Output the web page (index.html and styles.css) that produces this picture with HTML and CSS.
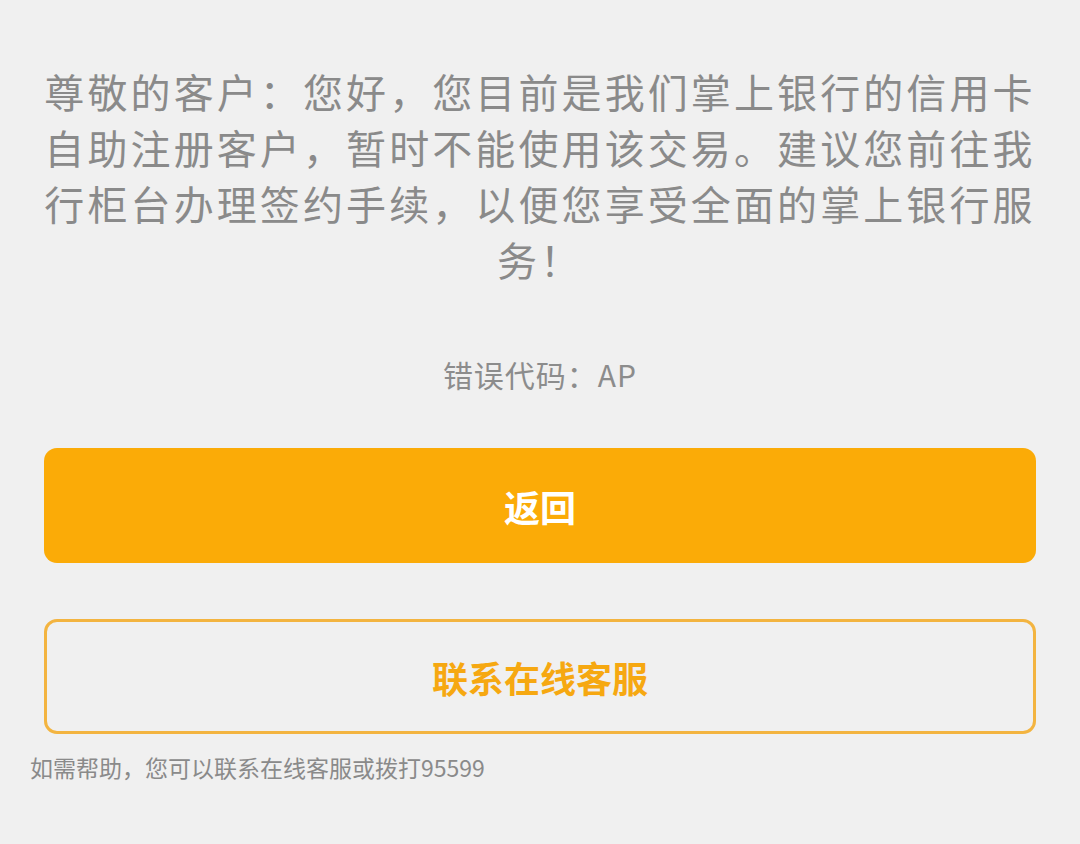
FILE: index.html
```html
<!DOCTYPE html>
<html lang="zh-CN">
  <head>
    <meta charset="UTF-8" />
    <meta name="viewport" content="width=device-width, initial-scale=1.0" />
    <title>提示</title>
    <link rel="stylesheet" href="styles.css">
  </head>
  <body>
    <div class="page">
      <p class="message">尊敬的客户：您好，您目前是我们掌上银行的信用卡自助注册客户，暂时不能使用该交易。建议您前往我行柜台办理签约手续，以便您享受全面的掌上银行服务！</p>
      <div class="code">错误代码：AP</div>
      <button class="btn btn-main">返回</button>
      <button class="btn btn-line">联系在线客服</button>
    </div>
    <div class="help">如需帮助，您可以联系在线客服或拨打95599</div>
  </body>
</html>
```

FILE: styles.css
```css
body {
  font-family: "Noto Sans CJK SC", "Noto Sans", sans-serif;
  background-color: #f0f0f0;
  margin: 0;
  padding: 0;
}
.page {
  padding: 63px 44px 0 44px;
}
.message {
  margin: 0;
  font-size: 40px;
  letter-spacing: 3.1px;
  line-height: 56px;
  color: #8a8a8a;
  text-align: center;
}
.code {
  margin-top: 67px;
  font-size: 30px;
  letter-spacing: 1px;
  line-height: 40px;
  color: #8c8c8c;
  text-align: center;
}
.btn {
  display: block;
  width: 100%;
  font-family: inherit;
  font-size: 36px;
  font-weight: bold;
  cursor: pointer;
  outline: none;
  border-radius: 13px;
}
.btn-main {
  margin-top: 54px;
  height: 115px;
  color: #fff;
  background-color: #fbab07;
  border: none;
}
.btn-line {
  margin-top: 56px;
  height: 115px;
  color: #f6a811;
  background-color: transparent;
  border: 3px solid #f3b440;
}
.help {
  padding: 16px 30px 0 30px;
  font-size: 23px;
  color: #8a8a8a;
}
```
